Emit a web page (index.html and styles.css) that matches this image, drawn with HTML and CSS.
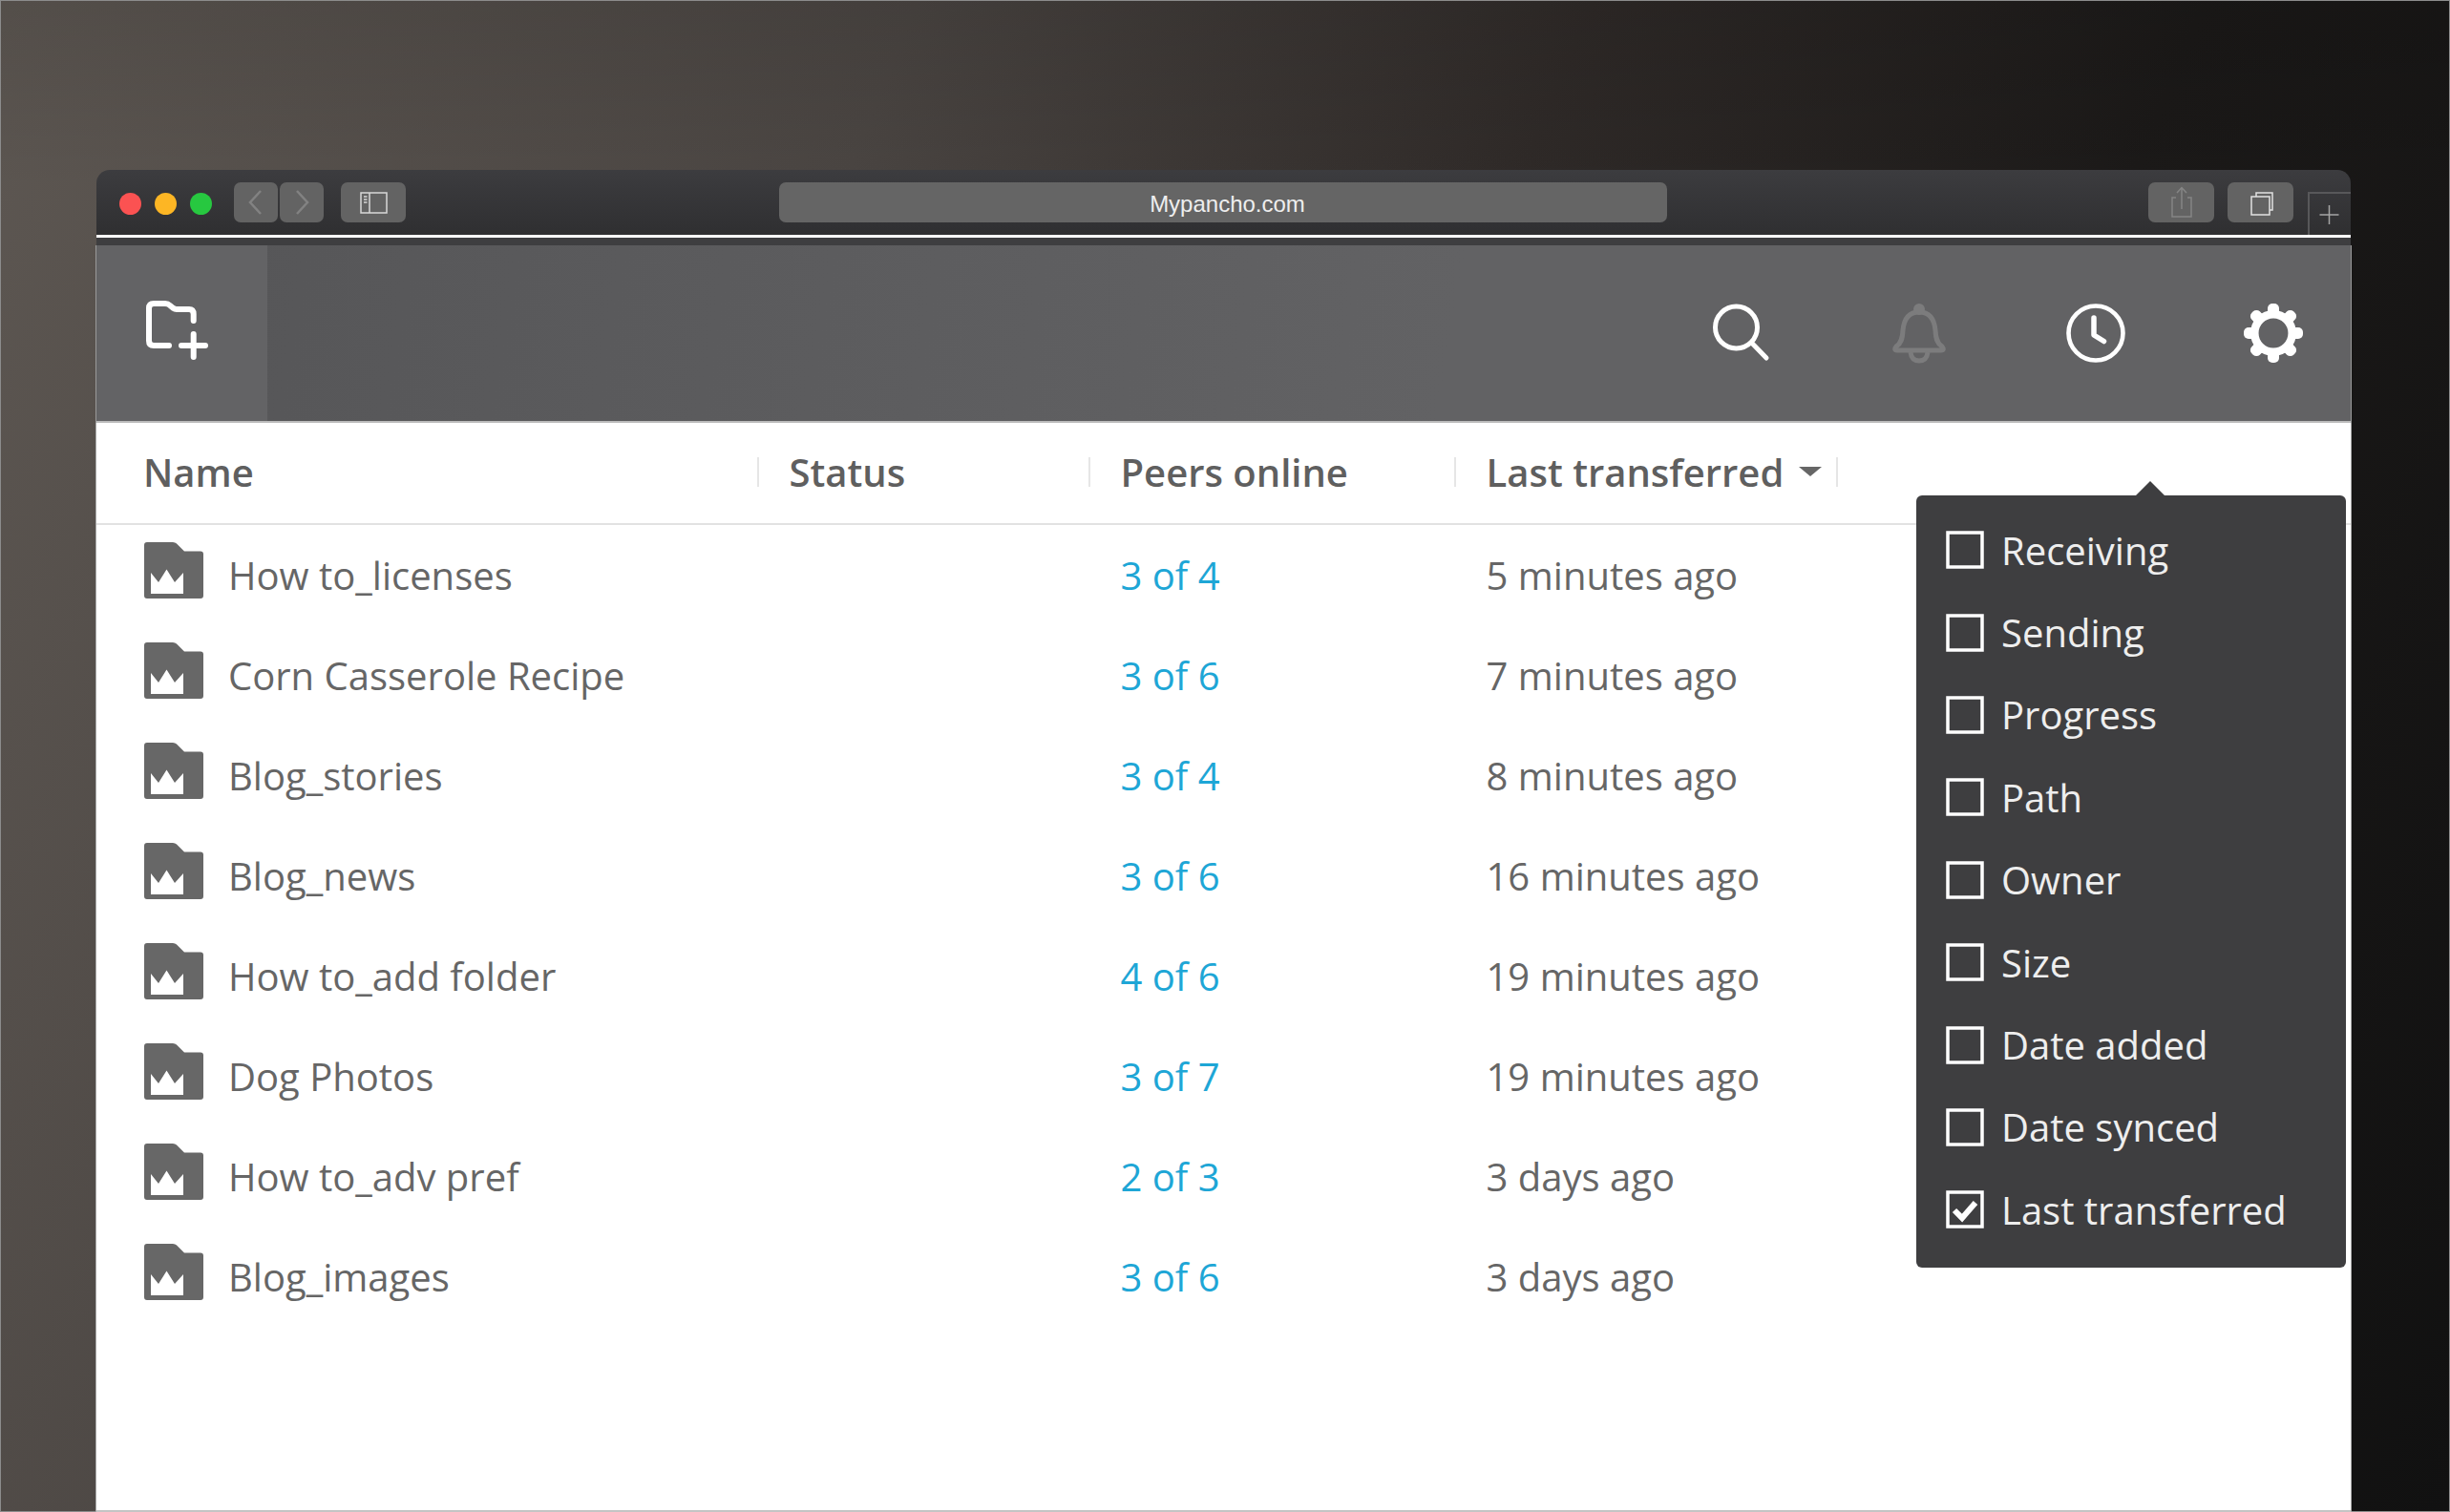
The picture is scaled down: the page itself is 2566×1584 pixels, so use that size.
FILE: index.html
```html
<!DOCTYPE html>
<html lang="en">
<head>
<meta charset="utf-8">
<title>Mypancho.com</title>
<link rel="stylesheet" href="styles.css">
</head>
<body>
<svg class="defs" width="0" height="0" aria-hidden="true">
  <symbol id="folder" viewBox="0 0 62 59">
    <path fill="#676767" d="M3 0H30Q32.500 0 34 1.500L42 9.500H59Q62 9.500 62 12.500V56Q62 59 59 59H3Q0 59 0 56V3Q0 0 3 0Z"/>
    <path fill="#fff" d="M7 32L15 42L23.500 28.500L32 42L41 32V54H7Z"/>
  </symbol>
  <symbol id="box" viewBox="0 0 40 40">
    <rect x="2" y="2" width="36" height="36" fill="none" stroke="#fff" stroke-width="3.500"/>
  </symbol>
</svg>
<div class="window">
  <div class="titlebar">
    <div class="lights"><span class="light red"></span><span class="light amber"></span><span class="light green"></span></div>
    <div class="nav">
      <span class="btn nav-btn"><svg width="46" height="42" viewBox="0 0 46 42"><path d="M28 9L17 21L28 33" fill="none" stroke="#828282" stroke-width="2.500"/></svg></span>
      <span class="btn nav-btn"><svg width="46" height="42" viewBox="0 0 46 42"><path d="M18 9L29 21L18 33" fill="none" stroke="#828282" stroke-width="2.500"/></svg></span>
    </div>
    <span class="btn wide-btn"><svg width="68" height="42" viewBox="0 0 68 42"><rect x="21" y="11" width="27" height="21" fill="none" stroke="#d8d8d8" stroke-width="1.500"/><path d="M30 11V32" stroke="#d8d8d8" stroke-width="1.500"/><path d="M24 15H27.500M24 18H27.500M24 21H27.500" stroke="#d8d8d8" stroke-width="1.500"/></svg></span>
    <div class="url">Mypancho.com</div>
    <span class="btn wide-btn"><svg width="69" height="42" viewBox="0 0 69 42"><path d="M29 21H25V41H45V21H41M35 33V11M30 16L35 10.500L40 16" transform="translate(0 -5)" fill="none" stroke="#858585" stroke-width="1.500"/></svg></span>
    <span class="btn wide-btn tabs-btn"><svg width="69" height="42" viewBox="0 0 69 42"><rect x="25" y="15" width="19" height="19" fill="none" stroke="#e2e2e2" stroke-width="1.500"/><path d="M30 15V11H47V29H44" fill="none" stroke="#e2e2e2" stroke-width="1.500"/></svg></span>
    <span class="new-tab"><svg width="45" height="45" viewBox="0 0 45 45"><path d="M22.500 14V34M12.500 24H32.500" stroke="#a5a5a5" stroke-width="1.500"/></svg></span>
  </div>
  <div class="rule"></div>
  <div class="strip"></div>
  <div class="toolbar">
    <div class="add">
      <svg width="72" height="70" viewBox="0 0 72 70"><path d="M30 47H14Q9 47 9 42V8Q9 3 14 3H26Q29 3 31 5L34 7.500Q36 9 38 9H51Q55.700 9 55.700 14V21" fill="none" stroke="#fff" stroke-width="6" stroke-linecap="round" stroke-linejoin="round"/><path d="M55.700 35V59M43 47H68" fill="none" stroke="#fff" stroke-width="6" stroke-linecap="round"/></svg>
    </div>
    <div class="tools">
      <svg width="60" height="66" viewBox="0 0 60 66"><circle cx="24.500" cy="25" r="22" fill="none" stroke="#fff" stroke-width="5"/><path d="M40.500 41L56 57" stroke="#fff" stroke-width="5" stroke-linecap="round"/></svg>
      <svg width="56" height="64" viewBox="0 0 56 64"><path d="M28 10C17 10 12 18 11 29C10.500 38 9 43 4 46Q1 50 5 50H51Q55 50 52 46C47 43 45.500 38 45 29C44 18 39 10 28 10Z" fill="none" stroke="#7c7c7d" stroke-width="5" stroke-linejoin="round"/><circle cx="28" cy="7" r="6" fill="#7c7c7d"/><path d="M19 52Q20 61 28 61Q36 61 37 52" fill="none" stroke="#7c7c7d" stroke-width="5"/></svg>
      <svg width="64" height="64" viewBox="0 0 64 64"><circle cx="32" cy="32" r="28.500" fill="none" stroke="#fff" stroke-width="4.600"/><path d="M30 16V34L40.500 40.500" fill="none" stroke="#fff" stroke-width="5.500" stroke-linecap="round" stroke-linejoin="round"/></svg>
      <svg width="64" height="64" viewBox="0 0 64 64"><g fill="#fff"><rect x="26" y="1" width="12" height="14" rx="5"/><rect x="26" y="49" width="12" height="14" rx="5"/><rect x="1" y="26" width="14" height="12" rx="5"/><rect x="49" y="26" width="14" height="12" rx="5"/><rect x="26" y="1" width="12" height="14" rx="5" transform="rotate(45 32 32)"/><rect x="26" y="49" width="12" height="14" rx="5" transform="rotate(45 32 32)"/><rect x="1" y="26" width="14" height="12" rx="5" transform="rotate(45 32 32)"/><rect x="49" y="26" width="14" height="12" rx="5" transform="rotate(45 32 32)"/></g><circle cx="32" cy="32" r="19.700" fill="none" stroke="#fff" stroke-width="8.500"/></svg>
    </div>
  </div>
  <div class="content">
    <div class="thead">
      <div class="col col-name">Name</div>
      <div class="col col-status"><span class="sep"></span>Status</div>
      <div class="col col-peers"><span class="sep"></span>Peers online</div>
      <div class="col col-last"><span class="sep"></span>Last transferred<span class="caret"></span><span class="sep sep-end"></span></div>
    </div>
    <div class="row"><div class="col col-name"><svg class="folder"><use href="#folder"/></svg>How to_licenses</div><div class="col col-status"></div><div class="col col-peers peers">3 of 4</div><div class="col col-last">5 minutes ago</div></div>
    <div class="row"><div class="col col-name"><svg class="folder"><use href="#folder"/></svg>Corn Casserole Recipe</div><div class="col col-status"></div><div class="col col-peers peers">3 of 6</div><div class="col col-last">7 minutes ago</div></div>
    <div class="row"><div class="col col-name"><svg class="folder"><use href="#folder"/></svg>Blog_stories</div><div class="col col-status"></div><div class="col col-peers peers">3 of 4</div><div class="col col-last">8 minutes ago</div></div>
    <div class="row"><div class="col col-name"><svg class="folder"><use href="#folder"/></svg>Blog_news</div><div class="col col-status"></div><div class="col col-peers peers">3 of 6</div><div class="col col-last">16 minutes ago</div></div>
    <div class="row"><div class="col col-name"><svg class="folder"><use href="#folder"/></svg>How to_add folder</div><div class="col col-status"></div><div class="col col-peers peers">4 of 6</div><div class="col col-last">19 minutes ago</div></div>
    <div class="row"><div class="col col-name"><svg class="folder"><use href="#folder"/></svg>Dog Photos</div><div class="col col-status"></div><div class="col col-peers peers">3 of 7</div><div class="col col-last">19 minutes ago</div></div>
    <div class="row"><div class="col col-name"><svg class="folder"><use href="#folder"/></svg>How to_adv pref</div><div class="col col-status"></div><div class="col col-peers peers">2 of 3</div><div class="col col-last">3 days ago</div></div>
    <div class="row"><div class="col col-name"><svg class="folder"><use href="#folder"/></svg>Blog_images</div><div class="col col-status"></div><div class="col col-peers peers">3 of 6</div><div class="col col-last">3 days ago</div></div>
    <div class="menu">
      <span class="menu-arrow"></span>
      <div class="opt"><svg class="box"><use href="#box"/></svg>Receiving</div>
      <div class="opt"><svg class="box"><use href="#box"/></svg>Sending</div>
      <div class="opt"><svg class="box"><use href="#box"/></svg>Progress</div>
      <div class="opt"><svg class="box"><use href="#box"/></svg>Path</div>
      <div class="opt"><svg class="box"><use href="#box"/></svg>Owner</div>
      <div class="opt"><svg class="box"><use href="#box"/></svg>Size</div>
      <div class="opt"><svg class="box"><use href="#box"/></svg>Date added</div>
      <div class="opt"><svg class="box"><use href="#box"/></svg>Date synced</div>
      <div class="opt"><svg class="box" viewBox="0 0 40 40"><use href="#box" width="40" height="40"/><path d="M9 21L17 29L31 13" fill="none" stroke="#fff" stroke-width="6"/></svg>Last transferred</div>
    </div>
  </div>
</div>
</body>
</html>
```
FILE: styles.css
```css
* { box-sizing: border-box; }
html, body { margin: 0; height: 1584px; overflow: hidden; }
body {
  padding: 178px 104px 0 101px;
  font-family: "Open Sans", "Noto Sans", sans-serif;
  background:
    linear-gradient(180deg, rgba(0, 0, 0, .1), rgba(0, 0, 0, 0) 200px),
    linear-gradient(112deg, #5d5752 0%, #4a4542 30%, #2f2a28 52%, #1b1918 72%, #111 100%);
  box-shadow: inset 0 0 0 1px #8c8c8c;
}
.defs { position: absolute; }
.window { display: flex; flex-direction: column; height: 1406px; }
.titlebar {
  height: 68px; flex: none; display: flex; align-items: flex-start;
  padding: 13px 0 0 24px;
  border-radius: 14px 14px 0 0;
  background: linear-gradient(180deg, #3c3c3f, #2f2f31);
}
.lights { display: flex; gap: 14px; margin-top: 11px; }
.light { width: 23px; height: 23px; border-radius: 50%; }
.red { background: #fb5252; }
.amber { background: #fdb624; }
.green { background: #27c840; }
.nav { display: flex; gap: 2px; margin-left: 23px; }
.btn { display: block; height: 42px; border-radius: 7px; background: #636363; flex: none; }
.btn svg { display: block; }
.nav-btn { width: 46px; }
.wide-btn { width: 68px; margin-left: 18px; }
.url {
  width: 930px; height: 42px; margin: 0 504px 0 391px; flex: none; padding-left: 9px;
  border-radius: 7px; background: #656565; color: #eee;
  font: 24px/45px "Liberation Sans", Arial, sans-serif; text-align: center;
}
.url + .btn { margin-left: 0; width: 69px; }
.tabs-btn { width: 69px; margin-left: 14px; }
.new-tab {
  display: block; width: 45px; height: 45px; margin: 10px 0 0 15px; flex: none;
  border: solid #58585a; border-width: 2px 0 0 2px;
}
.new-tab svg { display: block; margin: -2px 0 0 -2px; }
.rule { height: 3px; flex: none; background: #fff; }
.strip { height: 8px; flex: none; background: #3e3e40; }
.toolbar {
  height: 186px; flex: none; display: flex; justify-content: space-between;
  border-bottom: 2px solid #bcbcbc;
  background: linear-gradient(100deg, #555557, #626264 60%);
  box-shadow: -1px 0 0 #999, 1px 0 0 #999;
}
.add { width: 179px; background: #636365; padding: 58px 0 0 46px; }
.add svg { display: block; }
.tools { display: flex; align-items: center; padding-right: 49px; }
.tools svg { display: block; flex: none; }
.tools svg:nth-child(1) { margin-right: 128px; margin-top: 4px; }
.tools svg:nth-child(2) { margin-right: 125px; }
.tools svg:nth-child(3) { margin-right: 122px; }
.content {
  position: relative; flex: 1; background: #fff; color: #666;
  font-size: 40px; box-shadow: -1px 0 0 #aaa, 1px 0 0 #aaa;
  border-bottom: 2px solid #c4c4c4;
}
.thead {
  display: flex; height: 107px; align-items: center; padding-bottom: 3px;
  border-bottom: 2px solid #e2e2e2;
  font-weight: 600; color: #5f5f5f;
}
.row { display: flex; height: 105px; align-items: center; }
.col { position: relative; display: flex; align-items: center; flex: none; white-space: nowrap; }
.col-name { width: 725.5px; padding-left: 49px; }
.col-status { width: 347px; }
.col-peers { width: 383px; }
.sep { position: absolute; left: -34px; top: 50%; width: 2px; height: 31px; margin-top: -15px; background: #e6e6e6; }
.sep-end { position: static; margin: 0 0 0 15px; }
.caret {
  width: 0; height: 0; margin-left: 16px;
  border: solid transparent; border-width: 10px 12px 0; border-top-color: #666;
}
.peers { color: #1ea6d6; }
.folder { width: 62px; height: 59px; margin: -10px 26px 0 1px; flex: none; }
.menu {
  position: absolute; left: 1906px; top: 76px; width: 450px; height: 809px;
  padding-top: 14px;
  background: #3e3e40; border-radius: 6px; color: #eee; font-size: 40px;
}
.menu-arrow {
  position: absolute; left: 229.500px; top: -15px;
  width: 0; height: 0;
  border: solid transparent; border-width: 0 15px 15px; border-bottom-color: #3e3e40;
}
.opt { display: flex; align-items: center; height: 86.400px; padding-left: 31px; white-space: nowrap; }
.box { width: 40px; height: 40px; margin-right: 18px; flex: none; }
```
